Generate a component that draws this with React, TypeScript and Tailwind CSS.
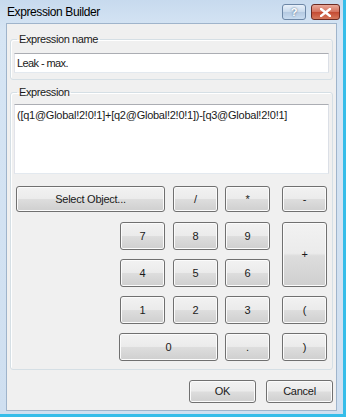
const font = "font-['Liberation_Sans',Arial,sans-serif]";

const btn =
  "flex items-center justify-center rounded-[3px] border border-[#707070] bg-[linear-gradient(to_bottom,#f2f2f2_0%,#ebebeb_48%,#dddddd_52%,#cfcfcf_100%)] shadow-[inset_0_0_0_1px_#fbfbfb] text-[11px] tracking-[-0.25px] text-[#1a1a1a]";

function Key({ label, className }: { label: string; className: string }) {
  return <button className={`${btn} ${className}`}>{label}</button>;
}

export default function App() {
  return (
    <div
      className={`${font} flex h-[417px] w-[346px] flex-col border-r-[3px] border-b-[3px] border-[#36bde9] bg-[linear-gradient(to_bottom,#c7daee,#d6e5f4_30px,#cfdff0)] pl-[6px] pr-[6px] pb-[3px]`}
    >
      {/* title bar */}
      <div className="flex h-[23px] shrink-0 items-center justify-between pl-[1px]">
        <span className="text-[12px] tracking-[-0.4px] text-black">Expression Builder</span>
        <div className="-mr-[3px] flex items-center gap-[5px] pt-[1px]">
          <div className="flex h-[16px] w-[24px] items-center justify-center rounded-[3px] border border-[#6d87a6] bg-[linear-gradient(to_bottom,#e9f1fa,#c8d9ec_50%,#b4c9e1_51%,#c9dcf0)] text-[11px] font-bold leading-none text-white [text-shadow:0_0_2px_#3b5676]">
            ?
          </div>
          <div className="flex h-[16px] w-[29px] items-center justify-center rounded-[3px] border border-[#6b2a22] bg-[linear-gradient(to_bottom,#e9a99a,#d4705c_50%,#c44a32_51%,#d6785c)]">
            <svg width="11" height="9" viewBox="0 0 11 9">
              <path
                d="M1 1 L10 8 M10 1 L1 8"
                stroke="#ffffff"
                strokeWidth="2.4"
                strokeLinecap="square"
              />
            </svg>
          </div>
        </div>
      </div>

      {/* client area */}
      <div className="flex flex-1 flex-col border border-[#9fb4cb] bg-[#f0f0f0] px-[2px] pt-[9px]">
        {/* Expression name */}
        <fieldset className="mx-[1px] rounded-[3px] border border-[#d5dfe5] px-[3px] pb-[6px] shadow-[inset_1px_1px_0_#fff]">
          <legend className="ml-[3px] px-[2px] text-[11px] leading-[12px] tracking-[-0.4px] text-[#1a1a1a]">
            Expression name
          </legend>
          <div className="mt-[8px] flex h-[20px] items-center border border-[#abadb3] border-l-[#e2e3ea] border-r-[#dbdfe6] border-b-[#e3e9ef] bg-white px-[2px] text-[11px] tracking-[-0.6px] text-[#1a1a1a]">
            Leak - max.
          </div>
        </fieldset>

        {/* Expression */}
        <fieldset className="mx-[1px] mt-[6px] rounded-[3px] border border-[#d5dfe5] px-[3px] pb-[8px] shadow-[inset_1px_1px_0_#fff]">
          <legend className="ml-[3px] px-[2px] text-[11px] leading-[12px] tracking-[-0.4px] text-[#1a1a1a]">
            Expression
          </legend>
          <div className="mt-[6px] h-[70px] border border-[#abadb3] border-l-[#e2e3ea] border-r-[#dbdfe6] border-b-[#e3e9ef] bg-white px-[2px] pt-[3px] text-[11px] leading-[14px] tracking-[-0.25px] text-[#1a1a1a]">
            ([q1@Global!2!0!1]+[q2@Global!2!0!1])-[q3@Global!2!0!1]
          </div>

          <div className="mt-[12px] ml-[2px] grid grid-cols-[104px_45px_8px_45px_7px_45px_12px_45px] grid-rows-[27px_28px_28px_28px_28px] gap-y-[9px]">
            <Key label="Select Object..." className="col-start-1 col-end-3 row-start-1 h-[26px]" />
            <Key label="/" className="col-start-4 row-start-1 h-[26px]" />
            <Key label="*" className="col-start-6 row-start-1 h-[26px]" />
            <Key label="-" className="col-start-8 row-start-1 h-[26px]" />

            <Key label="7" className="col-start-2 row-start-2" />
            <Key label="8" className="col-start-4 row-start-2" />
            <Key label="9" className="col-start-6 row-start-2" />
            <Key label="+" className="col-start-8 row-start-2 row-end-4" />

            <Key label="4" className="col-start-2 row-start-3" />
            <Key label="5" className="col-start-4 row-start-3" />
            <Key label="6" className="col-start-6 row-start-3" />

            <Key label="1" className="col-start-2 row-start-4" />
            <Key label="2" className="col-start-4 row-start-4" />
            <Key label="3" className="col-start-6 row-start-4" />
            <Key label="(" className="col-start-8 row-start-4" />

            <Key label="0" className="col-start-2 col-end-5 row-start-5 -ml-[1px]" />
            <Key label="." className="col-start-6 row-start-5" />
            <Key label=")" className="col-start-8 row-start-5" />
          </div>
        </fieldset>

        {/* dialog buttons */}
        <div className="mt-[10px] flex justify-end gap-[10px] pr-[1px]">
          <button
            className={`${btn} h-[23px] w-[67px] border-[#3c7fb1] shadow-[inset_0_0_0_1px_#b5e0f6]`}
          >
            OK
          </button>
          <button className={`${btn} h-[23px] w-[67px]`}>Cancel</button>
        </div>
      </div>
    </div>
  );
}
